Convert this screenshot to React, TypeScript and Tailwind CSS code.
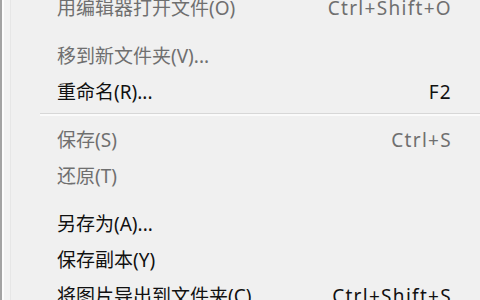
import React from "react";

type Item = { label: string; shortcut?: string; disabled?: boolean };
type Block = { items: Item[]; sepVisible: boolean };

const blocks: Block[] = [
  { items: [{ label: "用编辑器打开文件(O)", shortcut: "Ctrl+Shift+O", disabled: true }], sepVisible: false },
  {
    items: [
      { label: "移到新文件夹(V)...", disabled: true },
      { label: "重命名(R)...", shortcut: "F2" },
    ],
    sepVisible: true,
  },
  {
    items: [
      { label: "保存(S)", shortcut: "Ctrl+S", disabled: true },
      { label: "还原(T)", disabled: true },
    ],
    sepVisible: false,
  },
  {
    items: [
      { label: "另存为(A)..." },
      { label: "保存副本(Y)" },
      { label: "将图片导出到文件夹(C)", shortcut: "Ctrl+Shift+S" },
    ],
    sepVisible: false,
  },
];

function Row({ item }: { item: Item }) {
  const color = item.disabled ? "text-[#6f6f6f]" : "text-[#111111]";
  return (
    <div className={`flex h-[36px] items-center justify-between pl-[57px] pr-[28px] ${color}`}>
      <span className="whitespace-nowrap">{item.label}</span>
      {item.shortcut && (
        <span className="whitespace-nowrap tracking-[1.3px]">{item.shortcut}</span>
      )}
    </div>
  );
}

export default function App() {
  return (
    <div
      className="flex h-[300px] w-[480px] overflow-hidden bg-[#f0f0f0] text-[19px] leading-none"
      style={{ fontFamily: '"Noto Sans", "Noto Sans CJK SC", sans-serif' }}
    >
      <div className="w-[2px] shrink-0 bg-[#a3a3a3]" />
      <div className="w-[2px] shrink-0 bg-[#fcfcfc]" />
      <div className="w-[6px] shrink-0 bg-[#f2f2f2]" />
      <div className="w-[1px] shrink-0 bg-[#e6e6e6]" />
      <div className="-ml-[11px] mt-[-10px] flex min-w-0 flex-1 flex-col">
        {blocks.map((b, i) => (
          <div key={i} className="flex flex-col">
            {b.items.map((it, j) => (
              <Row key={j} item={it} />
            ))}
            {i < blocks.length - 1 && (
              <div className="h-[12px] pl-[40px]">
                {b.sepVisible && (
                  <div className="mt-[3px] flex flex-col">
                    <div className="h-[1px] bg-[#d7d7d7]" />
                    <div className="h-[2px] bg-[#fafafa]" />
                  </div>
                )}
              </div>
            )}
          </div>
        ))}
      </div>
    </div>
  );
}
